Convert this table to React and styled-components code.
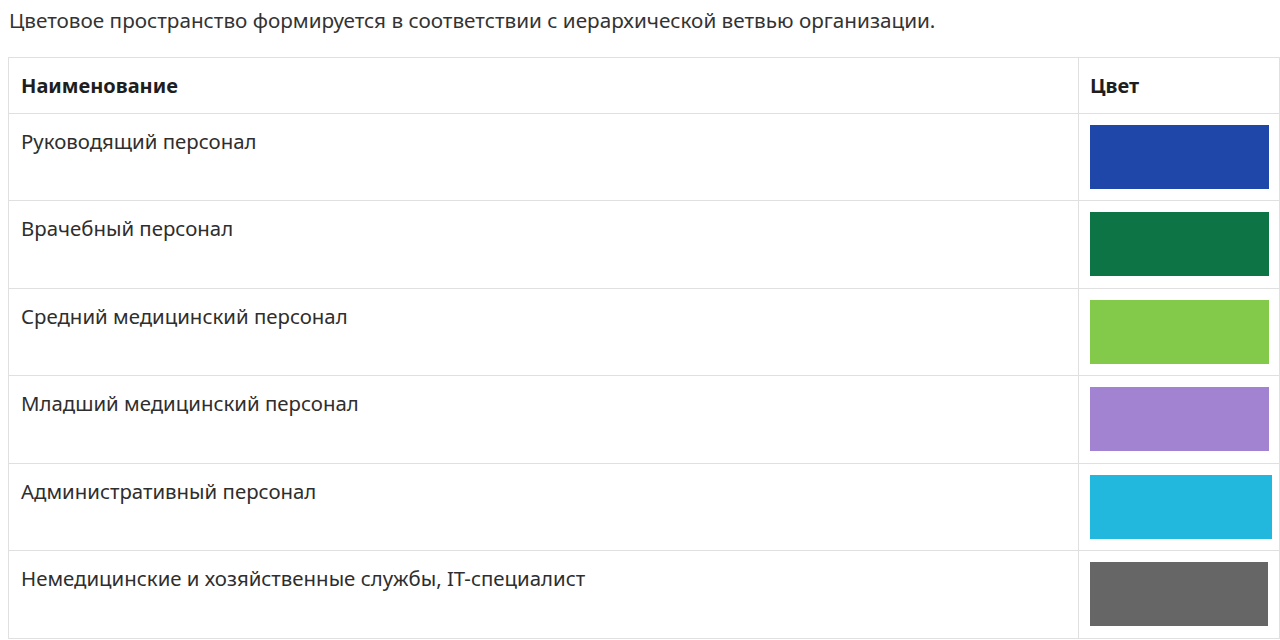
import React from 'react';
import styled, { createGlobalStyle } from 'styled-components';

const GlobalStyle = createGlobalStyle`
  body {
    margin: 0;
    padding: 8px 0 0 8px;
    background: #ffffff;
    font-family: "Noto Sans", "Open Sans", sans-serif;
    color: #2b2b2b;
  }
`;

const Intro = styled.p`
  margin: -1px 0 24px 1px;
  font-size: 20.7px;
  line-height: 26px;
  color: #333333;
`;

const Table = styled.table`
  width: 1272px;
  border-collapse: collapse;
  border: 1px solid #e0e0e0;
`;

const HeadCell = styled.th`
  height: 55px;
  padding: ${(p) => (p.narrow ? '0 6px 0 11px' : '0 12px')};
  text-align: left;
  font-size: 20px;
  font-weight: 700;
  color: #1e1e1e;
  border: 1px solid #e0e0e0;
  width: ${(p) => (p.narrow ? '183px' : 'auto')};
`;

const NameCell = styled.td`
  padding: 14px 12px 0 12px;
  vertical-align: top;
  font-size: 20.4px;
  line-height: 26px;
  color: #2e2e2e;
  border: 1px solid #e0e0e0;
`;

const ColorCell = styled.td`
  padding: 11px 6px ${(p) => (p.extra ? 12 : 11)}px 11px;
  vertical-align: top;
  border: 1px solid #e0e0e0;
`;

const Swatch = styled.div`
  width: ${(p) => p.w}px;
  height: 64px;
  background: ${(p) => p.color};
`;

const rows = [
  { name: 'Руководящий персонал', color: '#1f47aa', w: 179 },
  { name: 'Врачебный персонал', color: '#0d7446', w: 179, extra: true },
  { name: 'Средний медицинский персонал', color: '#84ca4a', w: 179 },
  { name: 'Младший медицинский персонал', color: '#a283d2', w: 179, extra: true },
  { name: 'Административный персонал', color: '#22b8dd', w: 182 },
  { name: 'Немедицинские и хозяйственные службы, IT-специалист', color: '#666666', w: 178, extra: true },
];

export default function App() {
  return (
    <>
      <GlobalStyle />
      <Intro>Цветовое пространство формируется в соответствии с иерархической ветвью организации.</Intro>
      <Table>
        <thead>
          <tr>
            <HeadCell>Наименование</HeadCell>
            <HeadCell narrow>Цвет</HeadCell>
          </tr>
        </thead>
        <tbody>
          {rows.map((r) => (
            <tr key={r.name}>
              <NameCell>{r.name}</NameCell>
              <ColorCell extra={r.extra}>
                <Swatch color={r.color} w={r.w} />
              </ColorCell>
            </tr>
          ))}
        </tbody>
      </Table>
    </>
  );
}
